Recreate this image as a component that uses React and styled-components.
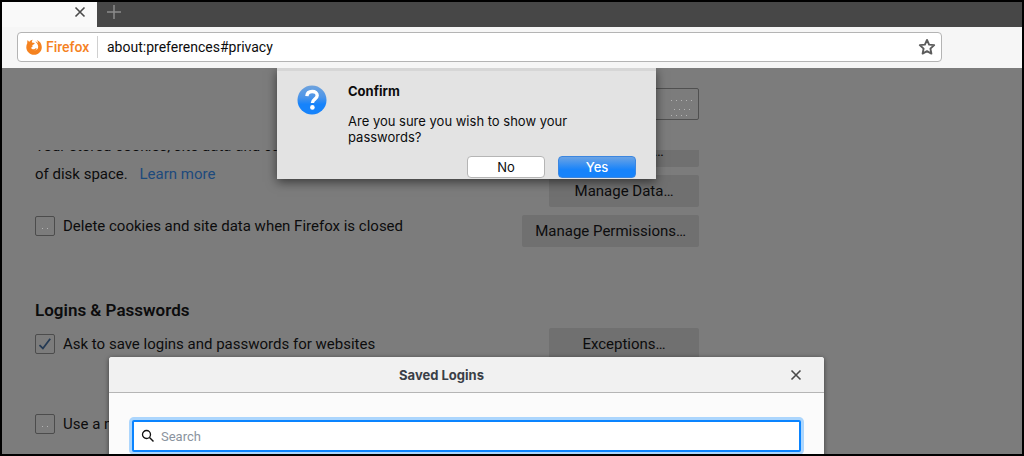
import React from 'react';
import styled, { createGlobalStyle } from 'styled-components';

const GlobalStyle = createGlobalStyle`
  *, *::before, *::after {
    box-sizing: border-box;
  }

  body {
    margin: 0;
    font-family: Roboto, 'Liberation Sans', sans-serif;
    font-size: 15px;
    color: #0c0c0d;
  }

  button, input {
    font: inherit;
    color: inherit;
  }
`;

const StyledWindow = styled.div`
  display: flex;
  flex-direction: column;
  height: 100vh;
  overflow: hidden;
  border: 2px solid #000;
  background-color: #7c7c7c;
`;

const StyledTabBar = styled.div`
  display: flex;
  flex: none;
  height: 25px;
  background-color: #474747;
`;

const StyledTab = styled.div`
  display: flex;
  align-items: flex-start;
  justify-content: flex-end;
  width: 95px;
  padding: 0 7px;
  background-color: #f9f9f9;
`;

const StyledIconButton = styled.button`
  display: flex;
  align-items: center;
  justify-content: center;
  width: 20px;
  height: 20px;
  padding: 0;
  border: none;
  background: none;
  color: ${({ $color }) => $color || '#4a4a4a'};
`;

const StyledNewTab = styled(StyledIconButton)`
  margin-left: 7px;
`;

const StyledToolbar = styled.div`
  display: flex;
  flex: none;
  height: 41px;
  padding: 5px 80px 6px 15px;
  background-color: #f6f6f6;
`;

const StyledUrlBar = styled.div`
  display: flex;
  flex: 1;
  align-items: center;
  padding: 0 4px 0 8px;
  border: 1px solid #b4b4b4;
  border-radius: 4px;
  background-color: white;
`;

const StyledIdentity = styled.div`
  display: flex;
  align-items: center;
  gap: 4px;
  width: 72px;
  height: 22px;
  border-right: 1px solid #d0d0d0;
  font-size: 14px;
  font-weight: 500;
  color: #f5821f;
`;

const StyledUrlInput = styled.input`
  flex: 1;
  min-width: 0;
  padding: 0 9px;
  border: none;
  outline: none;
  background: none;
  font-size: 14px;
`;

const StyledContent = styled.div`
  position: relative;
  display: flex;
  flex: 1;
  flex-direction: column;
  min-height: 0;
  padding-left: 33px;
`;

const StyledSearchRow = styled.div`
  display: flex;
  flex: none;
  align-items: flex-start;
  justify-content: flex-end;
  max-width: 664px;
  height: 82px;
  padding-top: 20px;
`;

const StyledField = styled.span`
  position: relative;
  display: flex;
`;

const StyledPageSearch = styled.input`
  width: 250px;
  height: 32px;
  border: 1px solid #505050;
  border-radius: 2px;
  background: none;
`;

const StyledScroller = styled.div`
  flex: 1;
  min-height: 0;
  max-width: 664px;
  overflow: hidden;
`;

const StyledPane = styled.div`
  margin-top: -18px;
`;

const StyledSection = styled.section`
  display: flex;
  justify-content: space-between;
  min-height: 166px;
`;

const StyledColumn = styled.div`
  display: flex;
  flex-direction: column;
  white-space: nowrap;
`;

const StyledButtons = styled.div`
  display: flex;
  flex-direction: column;
  align-items: flex-end;
  gap: 8px;
  padding-top: ${({ $top }) => $top}px;
`;

const StyledPageButton = styled.button`
  min-width: 150px;
  height: 32px;
  padding: 0 13px;
  border: none;
  border-radius: 2px;
  background-color: #707070;
`;

const StyledParagraph = styled.p`
  margin: 0 0 28px;
  line-height: 28px;
`;

const StyledLink = styled.a`
  margin-left: 8px;
  color: #1d4a7c;
  text-decoration: none;
`;

const StyledHeading = styled.h2`
  margin: 0 0 12px;
  font-size: 17px;
  font-weight: 600;
  line-height: 24px;
`;

const StyledCheckLabel = styled.label`
  display: flex;
  align-items: center;
  gap: 8px;
  height: 20px;
  margin-bottom: 60px;
`;

const StyledCheckbox = styled.input`
  appearance: none;
  width: 20px;
  height: 20px;
  margin: 0;
  border: 1px solid #4c4c4c;
  border-radius: 2px;
`;

const StyledMark = styled.svg`
  position: absolute;
  right: 3px;
  bottom: 3px;
  pointer-events: none;
`;

// both dialogs are centered over the preferences pane, not over the window
const StyledDialogLayer = styled.div`
  position: absolute;
  top: ${({ $top }) => $top}px;
  right: 91px;
  bottom: 0;
  left: 0;
  display: flex;
  align-items: flex-start;
  justify-content: center;
  overflow: hidden;
`;

const StyledConfirm = styled.div`
  display: flex;
  gap: 21px;
  width: 379px;
  height: 111px;
  padding: 12px 20px 0;
  border-top: 3px solid #d6d6d6;
  background-color: #e3e3e3;
  box-shadow: 0 3px 10px rgba(0, 0, 0, 0.55);
  font-family: Inter, sans-serif;
  font-size: 13px;
  line-height: 16px;
`;

const StyledQuestion = styled.svg`
  flex: none;
  margin-top: 2px;
`;

const StyledConfirmBody = styled.div`
  flex: 1;
`;

const StyledConfirmTitle = styled.h1`
  margin: 0 0 14px;
  font-size: 13px;
  font-weight: 700;
  line-height: 16px;
`;

const StyledConfirmText = styled.p`
  width: 240px;
  margin: 0 0 11px;
`;

const StyledConfirmButtons = styled.div`
  display: flex;
  justify-content: flex-end;
  gap: 13px;
`;

const StyledConfirmButton = styled.button`
  width: 78px;
  height: 22px;
  padding: 0;
  border: 1px solid ${({ $primary }) => ($primary ? '#3b86e0' : '#b5b5b5')};
  border-radius: 4px;
  background: ${({ $primary }) =>
    $primary ? 'linear-gradient(#6ba3e4, #1683fb 65%)' : 'white'};
  color: ${({ $primary }) => ($primary ? 'white' : '#0c0c0d')};
  font-weight: ${({ $primary }) => ($primary ? 500 : 400)};
`;

const StyledLogins = styled.div`
  width: 715px;
  min-height: 120px;
  margin-top: 5px;
  border-radius: 3px 3px 0 0;
  background-color: #fbfbfb;
  box-shadow: 0 1px 5px rgba(0, 0, 0, 0.5);
`;

const StyledLoginsHeader = styled.div`
  display: flex;
  align-items: center;
  gap: 12px;
  height: 36px;
  padding-right: 18px;
  border-bottom: 1px solid #b5b5b5;
  border-radius: 3px 3px 0 0;
  background-color: #f1f1f1;
`;

const StyledLoginsTitle = styled.h1`
  flex: 1;
  margin: 0;
  font-family: Inter, sans-serif;
  font-size: 13px;
  font-weight: 700;
  text-align: center;
  color: #3a3f47;
`;

const StyledSearchBox = styled.label`
  display: flex;
  align-items: center;
  gap: 6px;
  height: 32px;
  margin: 27px 23px 0;
  padding: 0 7px;
  border: 2px solid #0a84ff;
  border-radius: 2px;
  background-color: white;
  box-shadow: 0 0 0 3px #acd6fd;
`;

const StyledSearchInput = styled.input`
  flex: 1;
  min-width: 0;
  padding: 0;
  border: none;
  outline: none;
  font-size: 13px;

  &::placeholder {
    color: #8a939e;
    opacity: 1;
  }
`;

const CloseIcon = () => (
  <svg width="12" height="12" viewBox="0 0 12 12" aria-hidden="true">
    <path
      d="M1.5 1.5l9 9M10.5 1.5l-9 9"
      fill="none"
      stroke="currentColor"
      strokeWidth="1.6"
    />
  </svg>
);

const PlusIcon = () => (
  <svg width="14" height="14" viewBox="0 0 14 14" aria-hidden="true">
    <path d="M7 0v14M0 7h14" stroke="currentColor" strokeWidth="1.5" />
  </svg>
);

const FirefoxIcon = () => (
  <svg width="16" height="16" viewBox="0 0 16 16" aria-hidden="true">
    <path
      fill="currentColor"
      d="M1.7 1l1.5 1.9C4 1.6 5.200.8 6.800.7 6 1.6 5.700 2.500 5.900 3.400L8.700 4.100C8.600 5 7.800 5.600 6.600 6c-.5.8-.4 1.500.1 2-.9-.1-1.400.3-1.600.9.8 1.400 2.500 1.700 4 .8.8-.5 1.500-.4 1.600.1-.6 1.100-1.500 1.500-2.500 1.600 2.200.2 4-1.300 4-3.600 0-2.100-1.100-3.800-2.900-5.400C10.600 2.600 11.500 3.200 12.300 4.200 12 2.900 11.500 1.900 10.800 1 14 2.200 15.800 5 15.800 8.200c0 4.200-3.400 7.600-7.700 7.600S.3 12.400.3 8.200C.3 6.600.7 5.400 1.300 4.300 1.100 3.200 1.200 2 1.700 1z"
    />
  </svg>
);

const StarIcon = () => (
  <svg width="18" height="18" viewBox="0 0 18 18" aria-hidden="true">
    <path
      d="M9 1.9l2.100 4.700 5.100.5-3.800 3.500 1 5L9 13.100l-4.400 2.500 1-5L1.800 7.100l5.100-.5z"
      fill="none"
      stroke="currentColor"
      strokeWidth="1.9"
      strokeLinejoin="round"
    />
  </svg>
);

const SearchIcon = () => (
  <svg width="14" height="14" viewBox="0 0 14 14" aria-hidden="true">
    <circle cx="5.5" cy="5.5" r="4" fill="none" stroke="#111" strokeWidth="1.3" />
    <path d="M8.5 8.5l4 4" stroke="#111" strokeWidth="1.5" />
  </svg>
);

const QuestionIcon = () => (
  <StyledQuestion width="30" height="30" viewBox="0 0 30 30" aria-hidden="true">
    <defs>
      <linearGradient id="question-fill" x1="0" y1="0" x2="0" y2="1">
        <stop offset="0" stopColor="#6fa3dd" />
        <stop offset="0.4" stopColor="#4d95e8" />
        <stop offset="0.65" stopColor="#1683fb" />
      </linearGradient>
    </defs>
    <circle cx="15" cy="15" r="14.5" fill="url(#question-fill)" />
    <path
      d="M9.9 11.200c.2-3 2.200-4.700 5.300-4.700 3 0 5 1.600 5 4.100 0 3.500-4.800 3.600-4.800 7.400"
      fill="none"
      stroke="white"
      strokeWidth="3.4"
    />
    <circle cx="15.4" cy="22.4" r="2.3" fill="white" />
  </StyledQuestion>
);

const CheckRow = ({ id, checked, children }) => (
  <StyledCheckLabel htmlFor={id}>
    <StyledField>
      <StyledCheckbox id={id} type="checkbox" defaultChecked={checked} />
      <StyledMark width="14" height="14" viewBox="0 0 14 14">
        {checked ? (
          <path
            d="M1.5 8.200l3.400 3.300L12.200 1.800"
            fill="none"
            stroke="#243a54"
            strokeWidth="1.8"
          />
        ) : (
          <path d="M4 9h1v1h-1zM9 9h1v1h-1z" fill="#b4b4b4" />
        )}
      </StyledMark>
    </StyledField>
    {children}
  </StyledCheckLabel>
);

const ConfirmDialog = () => (
  <StyledDialogLayer $top={0}>
    <StyledConfirm role="alertdialog" aria-labelledby="confirm-title">
      <QuestionIcon />
      <StyledConfirmBody>
        <StyledConfirmTitle id="confirm-title">Confirm</StyledConfirmTitle>
        <StyledConfirmText>
          Are you sure you wish to show your passwords?
        </StyledConfirmText>
        <StyledConfirmButtons>
          <StyledConfirmButton type="button">No</StyledConfirmButton>
          <StyledConfirmButton type="button" $primary>
            Yes
          </StyledConfirmButton>
        </StyledConfirmButtons>
      </StyledConfirmBody>
    </StyledConfirm>
  </StyledDialogLayer>
);

const SavedLoginsDialog = () => (
  <StyledDialogLayer $top={284}>
    <StyledLogins role="dialog" aria-labelledby="logins-title">
      <StyledLoginsHeader>
        <StyledLoginsTitle id="logins-title">Saved Logins</StyledLoginsTitle>
        <StyledIconButton type="button" aria-label="Close">
          <CloseIcon />
        </StyledIconButton>
      </StyledLoginsHeader>
      <StyledSearchBox htmlFor="logins-search">
        <SearchIcon />
        <StyledSearchInput id="logins-search" type="text" placeholder="Search" />
      </StyledSearchBox>
    </StyledLogins>
  </StyledDialogLayer>
);

const App = () => (
  <>
    <GlobalStyle />
    <StyledWindow>
      <StyledTabBar>
        <StyledTab>
          <StyledIconButton type="button" aria-label="Close tab">
            <CloseIcon />
          </StyledIconButton>
        </StyledTab>
        <StyledNewTab type="button" aria-label="New tab" $color="#8c8c8c">
          <PlusIcon />
        </StyledNewTab>
      </StyledTabBar>
      <StyledToolbar>
        <StyledUrlBar>
          <StyledIdentity>
            <FirefoxIcon />
            Firefox
          </StyledIdentity>
          <StyledUrlInput
            type="text"
            aria-label="Address"
            defaultValue="about:preferences#privacy"
          />
          <StyledIconButton type="button" aria-label="Bookmark" $color="#5c5c5c">
            <StarIcon />
          </StyledIconButton>
        </StyledUrlBar>
      </StyledToolbar>
      <StyledContent>
        <StyledSearchRow>
          <StyledField>
            <StyledPageSearch type="text" aria-label="Find in preferences" />
            <StyledMark width="26" height="20" viewBox="0 0 26 20">
              <path
                d="M1 3.5h22M4 12.5h18M1 18.5h18"
                stroke="#b4b4b4"
                strokeDasharray="1 4"
              />
            </StyledMark>
          </StyledField>
        </StyledSearchRow>
        <StyledScroller>
          <StyledPane>
            <StyledSection>
              <StyledColumn>
                <StyledParagraph>
                  Your stored cookies, site data and cache
                  <br />
                  of disk space. <StyledLink href="#more">Learn more</StyledLink>
                </StyledParagraph>
                <CheckRow id="delete-cookies">
                  Delete cookies and site data when Firefox is closed
                </CheckRow>
              </StyledColumn>
              <StyledButtons $top={3}>
                <StyledPageButton type="button">Clear Data…</StyledPageButton>
                <StyledPageButton type="button">Manage Data…</StyledPageButton>
                <StyledPageButton type="button">
                  Manage Permissions…
                </StyledPageButton>
              </StyledButtons>
            </StyledSection>
            <StyledSection>
              <StyledColumn>
                <StyledHeading>Logins &amp; Passwords</StyledHeading>
                <CheckRow id="save-logins" checked>
                  Ask to save logins and passwords for websites
                </CheckRow>
                <CheckRow id="master-password">Use a master password</CheckRow>
              </StyledColumn>
              <StyledButtons $top={30}>
                <StyledPageButton type="button">Exceptions…</StyledPageButton>
              </StyledButtons>
            </StyledSection>
          </StyledPane>
        </StyledScroller>
        <SavedLoginsDialog />
        <ConfirmDialog />
      </StyledContent>
    </StyledWindow>
  </>
);

export default App;
